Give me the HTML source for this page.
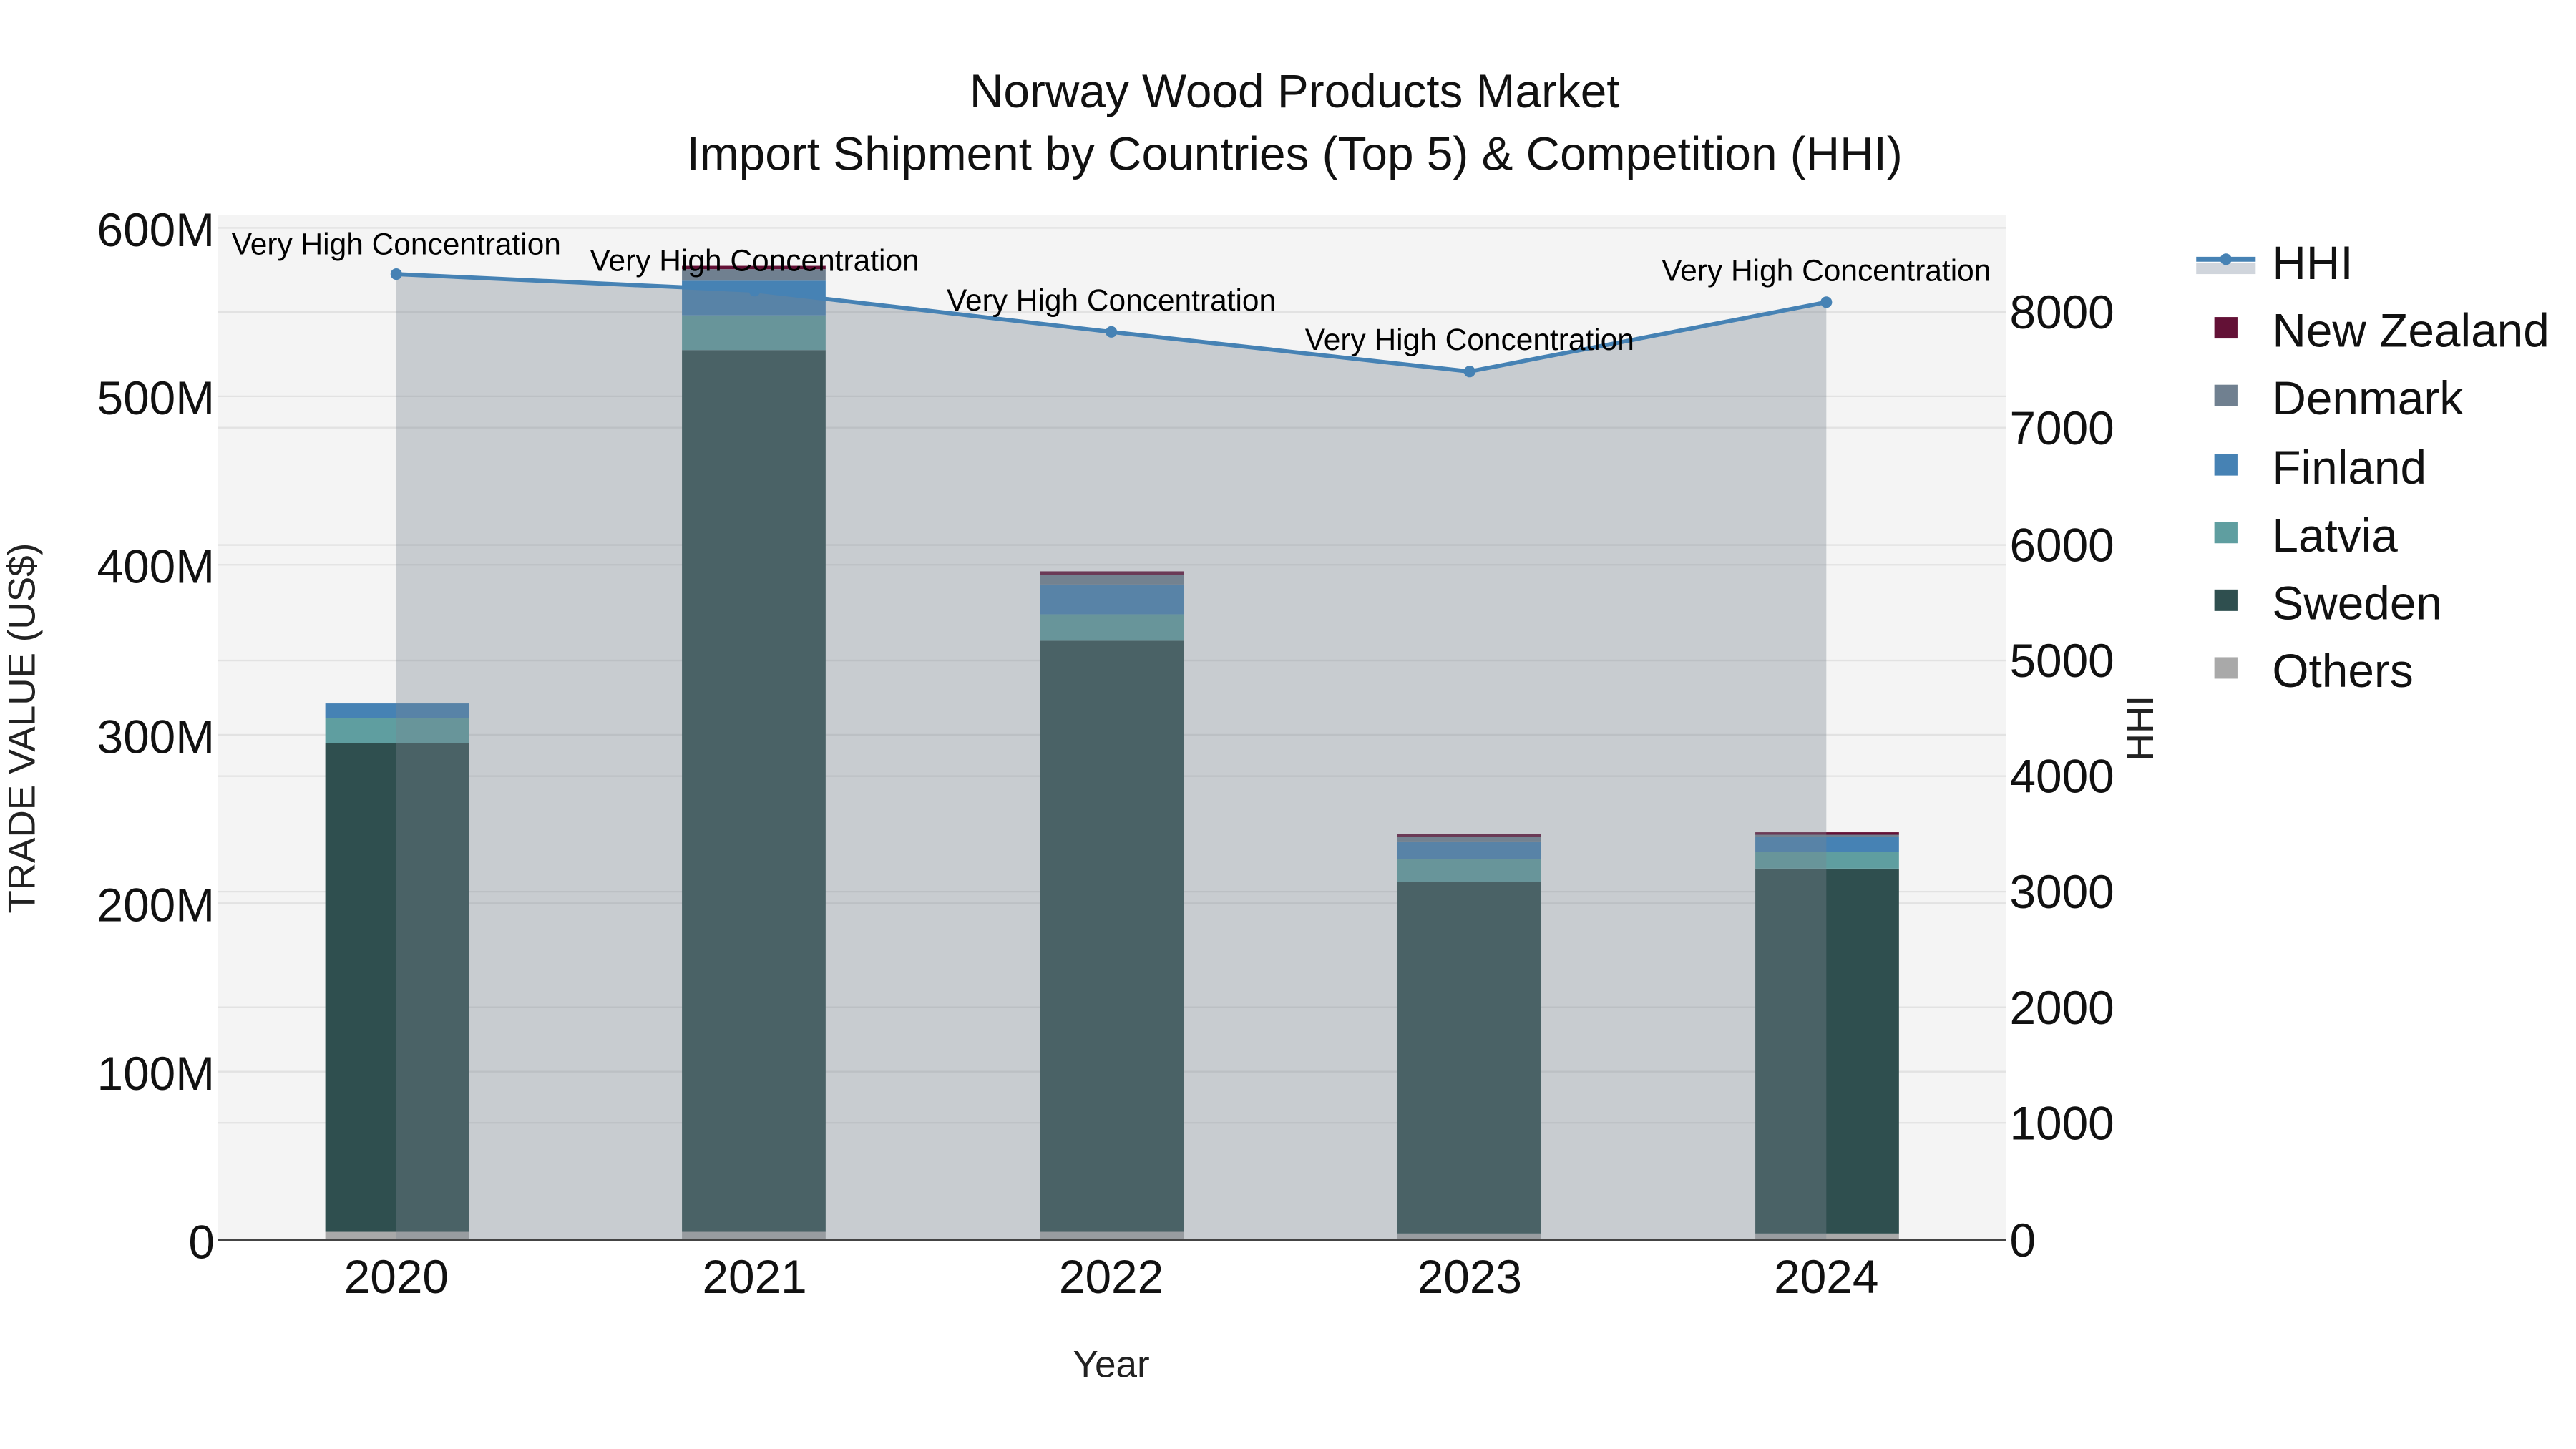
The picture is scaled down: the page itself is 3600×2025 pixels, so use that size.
<!DOCTYPE html>
<html><head><meta charset="utf-8"><style>html,body{margin:0;padding:0;background:#fff}svg{display:block}text{font-family:"Liberation Sans",sans-serif}</style></head><body>
<svg width="3600" height="2025" viewBox="0 0 1560 877.5" xmlns="http://www.w3.org/2000/svg">
<rect x="0" y="0" width="1560" height="877.5" fill="#fff"/>
<rect x="132" y="130" width="1083" height="621" fill="#f4f4f4"/>
<g stroke="#e2e2e2" stroke-width="1">
<line x1="132" x2="1215" y1="138" y2="138"/><line x1="132" x2="1215" y1="240" y2="240"/><line x1="132" x2="1215" y1="342" y2="342"/><line x1="132" x2="1215" y1="445" y2="445"/><line x1="132" x2="1215" y1="547" y2="547"/><line x1="132" x2="1215" y1="649" y2="649"/>
<line x1="132" x2="1215" y1="189" y2="189"/><line x1="132" x2="1215" y1="259" y2="259"/><line x1="132" x2="1215" y1="330" y2="330"/><line x1="132" x2="1215" y1="400" y2="400"/><line x1="132" x2="1215" y1="470" y2="470"/><line x1="132" x2="1215" y1="540" y2="540"/><line x1="132" x2="1215" y1="610" y2="610"/><line x1="132" x2="1215" y1="680" y2="680"/>
</g>
<g>
<rect x="197" y="746" width="87" height="5" fill="#a9a9a9"/><rect x="197" y="450" width="87" height="296" fill="#2f4f4f"/><rect x="197" y="435" width="87" height="15" fill="#5f9ea0"/><rect x="197" y="426" width="87" height="9" fill="#4682b4"/>
<rect x="413" y="746" width="87" height="5" fill="#a9a9a9"/><rect x="413" y="212" width="87" height="534" fill="#2f4f4f"/><rect x="413" y="191" width="87" height="21" fill="#5f9ea0"/><rect x="413" y="170" width="87" height="21" fill="#4682b4"/><rect x="413" y="163" width="87" height="7" fill="#708090"/><rect x="413" y="161" width="87" height="2" fill="#631136"/>
<rect x="630" y="746" width="87" height="5" fill="#a9a9a9"/><rect x="630" y="388" width="87" height="358" fill="#2f4f4f"/><rect x="630" y="372" width="87" height="16" fill="#5f9ea0"/><rect x="630" y="354" width="87" height="18" fill="#4682b4"/><rect x="630" y="348" width="87" height="6" fill="#708090"/><rect x="630" y="346" width="87" height="2" fill="#631136"/>
<rect x="846" y="747" width="87" height="4" fill="#a9a9a9"/><rect x="846" y="534" width="87" height="213" fill="#2f4f4f"/><rect x="846" y="520" width="87" height="14" fill="#5f9ea0"/><rect x="846" y="510" width="87" height="10" fill="#4682b4"/><rect x="846" y="507" width="87" height="3" fill="#708090"/><rect x="846" y="505" width="87" height="2" fill="#631136"/>
<rect x="1063" y="747" width="87" height="4" fill="#a9a9a9"/><rect x="1063" y="526" width="87" height="221" fill="#2f4f4f"/><rect x="1063" y="516" width="87" height="10" fill="#5f9ea0"/><rect x="1063" y="507" width="87" height="9" fill="#4682b4"/><rect x="1063" y="505" width="87" height="2" fill="#708090"/><rect x="1063" y="504" width="87" height="1.5" fill="#631136"/>
</g>
<path d="M240,166 L457,176 L673,201 L890,225 L1106,183 L1106,751 L240,751 Z" fill="rgba(122,132,143,0.36)"/>
<polyline points="240,166 457,176 673,201 890,225 1106,183" fill="none" stroke="#4682b4" stroke-width="2.5"/>
<g fill="#4682b4"><circle cx="240" cy="166" r="3.5"/><circle cx="457" cy="176" r="3.5"/><circle cx="673" cy="201" r="3.5"/><circle cx="890" cy="225" r="3.5"/><circle cx="1106" cy="183" r="3.5"/></g>
<line x1="132" x2="1215" y1="751" y2="751" stroke="#444" stroke-width="1.2"/>
<g font-size="18.4" fill="#000" text-anchor="middle">
<text x="240" y="154">Very High Concentration</text><text x="457" y="164">Very High Concentration</text><text x="673" y="188">Very High Concentration</text><text x="890" y="212">Very High Concentration</text><text x="1106" y="170">Very High Concentration</text>
</g>
<g font-size="28.5" fill="#111" text-anchor="middle">
<text x="784" y="65">Norway Wood Products Market</text>
<text x="784" y="103">Import Shipment by Countries (Top 5) &amp; Competition (HHI)</text>
</g>
<g font-size="28.5" fill="#111" text-anchor="end">
<text x="130" y="149">600M</text><text x="130" y="251">500M</text><text x="130" y="353">400M</text><text x="130" y="456">300M</text><text x="130" y="558">200M</text><text x="130" y="660">100M</text><text x="130" y="762">0</text>
</g>
<g font-size="28.5" fill="#111">
<text x="1217" y="199">8000</text><text x="1217" y="269">7000</text><text x="1217" y="340">6000</text><text x="1217" y="410">5000</text><text x="1217" y="480">4000</text><text x="1217" y="550">3000</text><text x="1217" y="620">2000</text><text x="1217" y="690">1000</text><text x="1217" y="761">0</text>
</g>
<g font-size="28.5" fill="#111" text-anchor="middle">
<text x="240" y="783">2020</text><text x="457" y="783">2021</text><text x="673" y="783">2022</text><text x="890" y="783">2023</text><text x="1106" y="783">2024</text>
</g>
<text x="673" y="834" font-size="23" fill="#222" text-anchor="middle">Year</text>
<text transform="translate(21,441) rotate(-90)" font-size="23" fill="#222" text-anchor="middle">TRADE VALUE (US$)</text>
<text transform="translate(1304,441) rotate(-90)" font-size="23" fill="#222" text-anchor="middle">HHI</text>
<rect x="1330" y="159" width="36" height="7" fill="#d0d5dc"/>
<line x1="1330" x2="1366" y1="157" y2="157" stroke="#4682b4" stroke-width="3"/>
<circle cx="1348" cy="157" r="3.5" fill="#4682b4"/>
<g font-size="28.5" fill="#111">
<text x="1376" y="169">HHI</text><text x="1376" y="210">New Zealand</text><text x="1376" y="251">Denmark</text><text x="1376" y="293">Finland</text><text x="1376" y="334">Latvia</text><text x="1376" y="375">Sweden</text><text x="1376" y="416">Others</text>
</g>
<rect x="1341" y="192" width="14" height="13" fill="#631136"/>
<rect x="1341" y="233" width="14" height="13" fill="#708090"/>
<rect x="1341" y="275" width="14" height="13" fill="#4682b4"/>
<rect x="1341" y="316" width="14" height="13" fill="#5f9ea0"/>
<rect x="1341" y="357" width="14" height="13" fill="#2f4f4f"/>
<rect x="1341" y="398" width="14" height="13" fill="#a9a9a9"/>
</svg>
</body></html>
